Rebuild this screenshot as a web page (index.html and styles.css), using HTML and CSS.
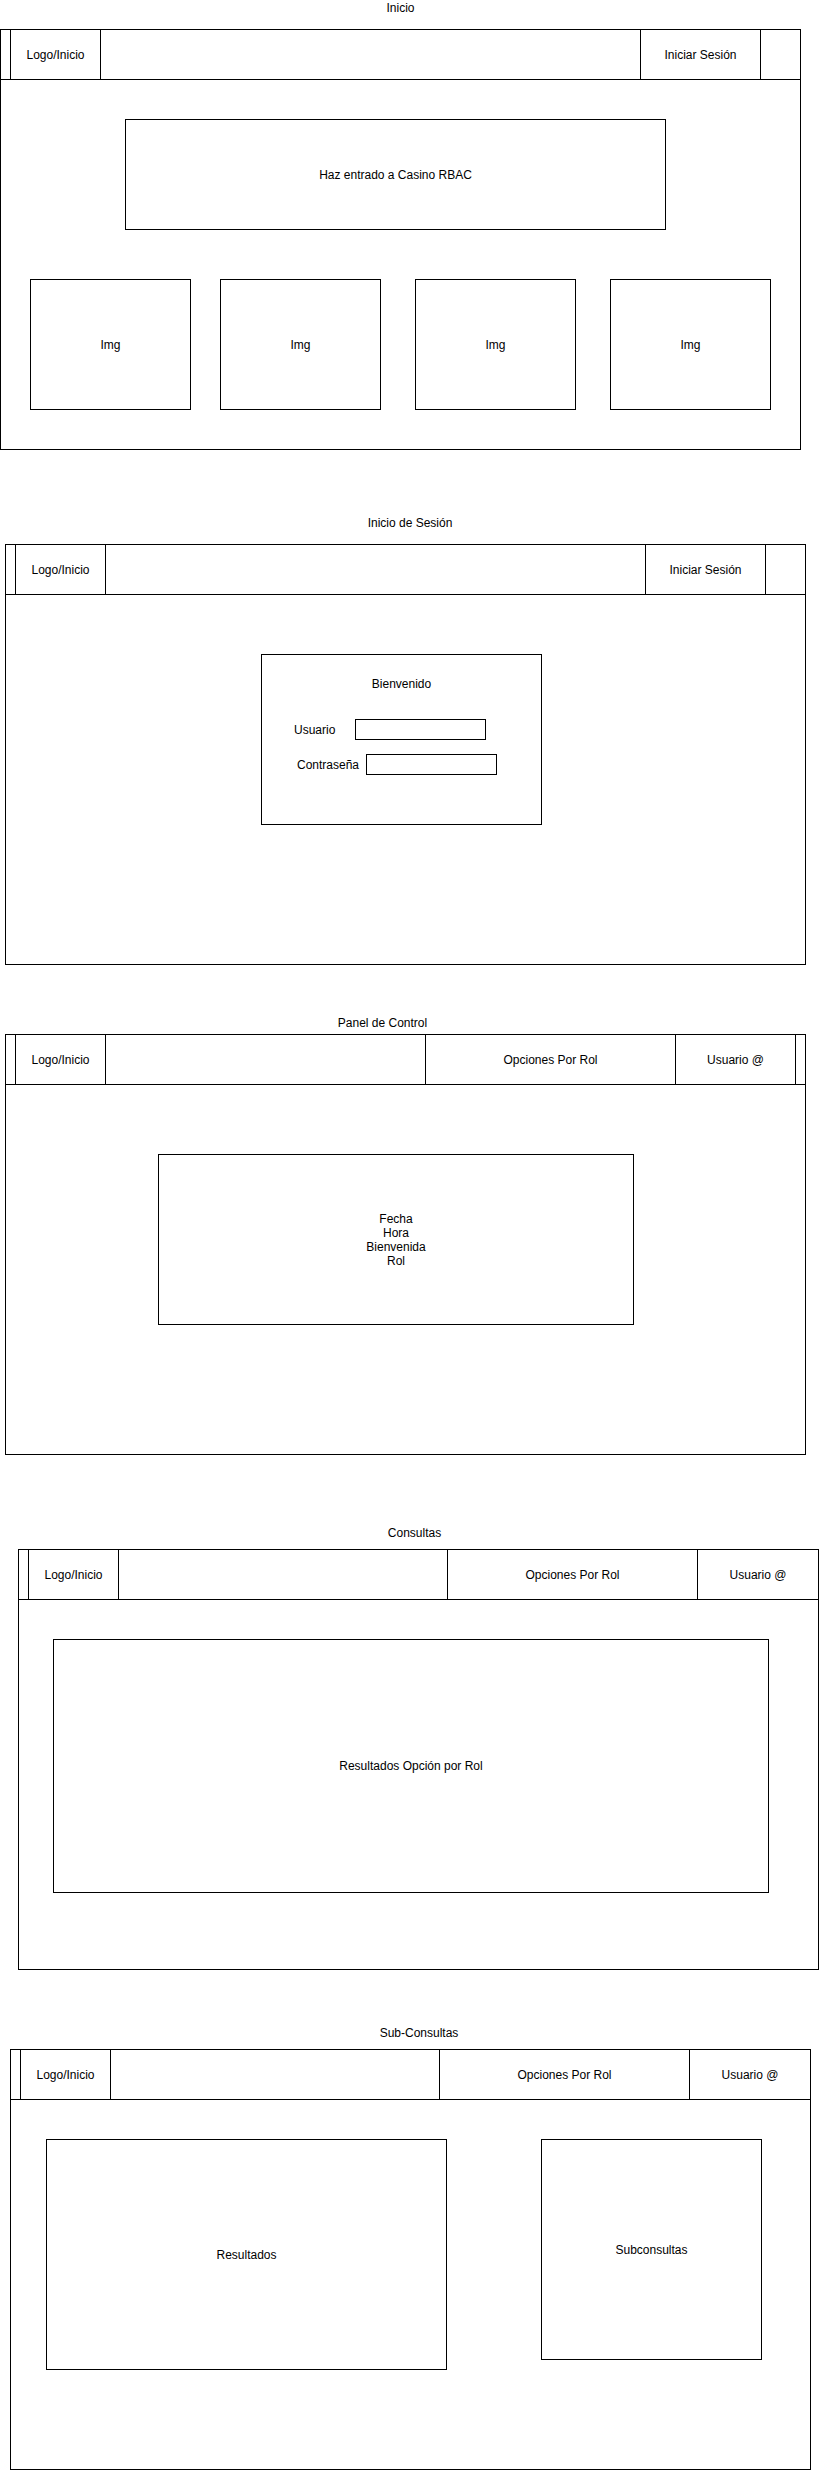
FILE: index.html
```html
<!DOCTYPE html>
<html lang="es">
<head>
    <meta charset="UTF-8">
    <meta name="viewport" content="width=device-width, initial-scale=1.0">
    <title>Casino RBAC - Wireframes</title>
    <link rel="stylesheet" href="styles.css">
</head>
<body>
    <!-- Inicio -->
    <section class="screen screen-home">
        <h2 class="screen-title">Inicio</h2>
        <div class="frame">
            <div class="topbar">
                <div class="cell cell-edge"></div>
                <div class="cell cell-logo">Logo/Inicio</div>
                <div class="cell cell-fill"></div>
                <div class="cell cell-action">Iniciar Sesión</div>
                <div class="cell cell-end"></div>
            </div>
            <div class="box hero-box">Haz entrado a Casino RBAC</div>
            <div class="img-row">
                <div class="box img-box">Img</div>
                <div class="box img-box">Img</div>
                <div class="box img-box">Img</div>
                <div class="box img-box">Img</div>
            </div>
        </div>
    </section>

    <!-- Inicio de Sesión -->
    <section class="screen screen-login">
        <h2 class="screen-title">Inicio de Sesión</h2>
        <div class="frame">
            <div class="topbar">
                <div class="cell cell-edge"></div>
                <div class="cell cell-logo">Logo/Inicio</div>
                <div class="cell cell-fill"></div>
                <div class="cell cell-action">Iniciar Sesión</div>
                <div class="cell cell-end"></div>
            </div>
            <form class="login-box" onsubmit="return false">
                <p class="welcome">Bienvenido</p>
                <div class="field field-user">
                    <label for="usuario">Usuario</label>
                    <input type="text" id="usuario">
                </div>
                <div class="field field-pass">
                    <label for="clave">Contraseña</label>
                    <input type="password" id="clave">
                </div>
            </form>
        </div>
    </section>

    <!-- Panel de Control -->
    <section class="screen screen-panel">
        <h2 class="screen-title">Panel de Control</h2>
        <div class="frame">
            <div class="topbar">
                <div class="cell cell-edge"></div>
                <div class="cell cell-logo">Logo/Inicio</div>
                <div class="cell cell-fill"></div>
                <div class="cell cell-roles">Opciones Por Rol</div>
                <div class="cell cell-user">Usuario @</div>
                <div class="cell cell-end cell-end-narrow"></div>
            </div>
            <div class="box panel-box">
                <span>Fecha</span>
                <span>Hora</span>
                <span>Bienvenida</span>
                <span>Rol</span>
            </div>
        </div>
    </section>

    <!-- Consultas -->
    <section class="screen screen-query">
        <h2 class="screen-title">Consultas</h2>
        <div class="frame">
            <div class="topbar">
                <div class="cell cell-edge"></div>
                <div class="cell cell-logo">Logo/Inicio</div>
                <div class="cell cell-fill"></div>
                <div class="cell cell-roles">Opciones Por Rol</div>
                <div class="cell cell-user">Usuario @</div>
            </div>
            <div class="box query-box">Resultados Opción por Rol</div>
        </div>
    </section>

    <!-- Sub-Consultas -->
    <section class="screen screen-sub">
        <h2 class="screen-title">Sub-Consultas</h2>
        <div class="frame">
            <div class="topbar">
                <div class="cell cell-edge"></div>
                <div class="cell cell-logo">Logo/Inicio</div>
                <div class="cell cell-fill"></div>
                <div class="cell cell-roles">Opciones Por Rol</div>
                <div class="cell cell-user">Usuario @</div>
            </div>
            <div class="sub-row">
                <div class="box results-box">Resultados</div>
                <div class="box subquery-box">Subconsultas</div>
            </div>
        </div>
    </section>
</body>
</html>
```

FILE: styles.css
```css
body {
    margin: 0;
    font-family: "Liberation Sans", Arial, sans-serif;
    font-size: 12px;
    color: #000;
    background-color: #fff;
}
.screen {
    width: 801px;
}
.screen-title {
    margin: 0;
    font-size: 12px;
    font-weight: normal;
    line-height: 14px;
    text-align: center;
}
.frame {
    box-sizing: border-box;
    height: 421px;
    border: 1px solid #000;
}

/* per screen offsets */
.screen-home {
    margin-top: 1px;
}
.screen-home .screen-title {
    margin-bottom: 14px;
}
.screen-login {
    margin-top: 66px;
    margin-left: 5px;
}
.screen-login .screen-title {
    margin-bottom: 14px;
    padding-left: 9px;
}
.screen-panel {
    margin-top: 51px;
    margin-left: 5px;
}
.screen-panel .screen-title {
    margin-bottom: 4px;
    padding-right: 46px;
}
.screen-query {
    margin-top: 71px;
    margin-left: 18px;
}
.screen-query .screen-title {
    margin-bottom: 9px;
    padding-right: 8px;
}
.screen-sub {
    margin-top: 56px;
    margin-left: 10px;
}
.screen-sub .screen-title {
    margin-bottom: 9px;
    padding-left: 17px;
}

/* top bar */
.topbar {
    display: flex;
    box-sizing: border-box;
    height: 50px;
    border-bottom: 1px solid #000;
}
.cell {
    display: flex;
    align-items: center;
    justify-content: center;
    box-sizing: border-box;
    flex-shrink: 0;
    border-right: 1px solid #000;
}
.cell:last-child {
    border-right: none;
}
.cell-edge {
    width: 10px;
}
.cell-logo {
    width: 90px;
}
.cell-fill {
    flex: 1;
}
.cell-action {
    width: 120px;
}
.cell-roles {
    width: 250px;
}
.cell-user {
    width: 120px;
}
.cell-end {
    width: 39px;
}
.cell-end-narrow {
    width: 9px;
}

/* content boxes */
.box {
    display: flex;
    align-items: center;
    justify-content: center;
    box-sizing: border-box;
    border: 1px solid #000;
    text-align: center;
}
.hero-box {
    width: 541px;
    height: 111px;
    margin: 39px 0 0 124px;
}
.img-row {
    display: flex;
    margin: 49px 0 0 29px;
}
.img-box {
    width: 161px;
    height: 131px;
    margin-left: 34px;
}
.img-box:first-child {
    margin-left: 0;
}
.img-box:nth-child(2) {
    margin-left: 29px;
}

.login-box {
    box-sizing: border-box;
    width: 281px;
    height: 171px;
    margin: 59px 0 0 255px;
    padding-top: 22px;
    border: 1px solid #000;
}
.welcome {
    margin: 0;
    line-height: 14px;
    text-align: center;
}
.field {
    display: flex;
    align-items: center;
    height: 21px;
}
.field-user {
    margin-top: 28px;
    padding-left: 32px;
    gap: 20px;
}
.field-pass {
    margin-top: 14px;
    padding-left: 35px;
    gap: 7px;
}
.field input {
    box-sizing: border-box;
    width: 131px;
    height: 21px;
    margin: 0;
    padding: 0 4px;
    border: 1px solid #000;
    border-radius: 0;
    background-color: #fff;
    font-family: inherit;
    font-size: 12px;
}

.panel-box {
    flex-direction: column;
    width: 476px;
    height: 171px;
    margin: 69px 0 0 152px;
    line-height: 14px;
}
.query-box {
    width: 716px;
    height: 254px;
    margin: 39px 0 0 34px;
}
.sub-row {
    display: flex;
    align-items: flex-start;
    gap: 94px;
    margin: 39px 0 0 35px;
}
.results-box {
    width: 401px;
    height: 231px;
}
.subquery-box {
    width: 221px;
    height: 221px;
}
```
